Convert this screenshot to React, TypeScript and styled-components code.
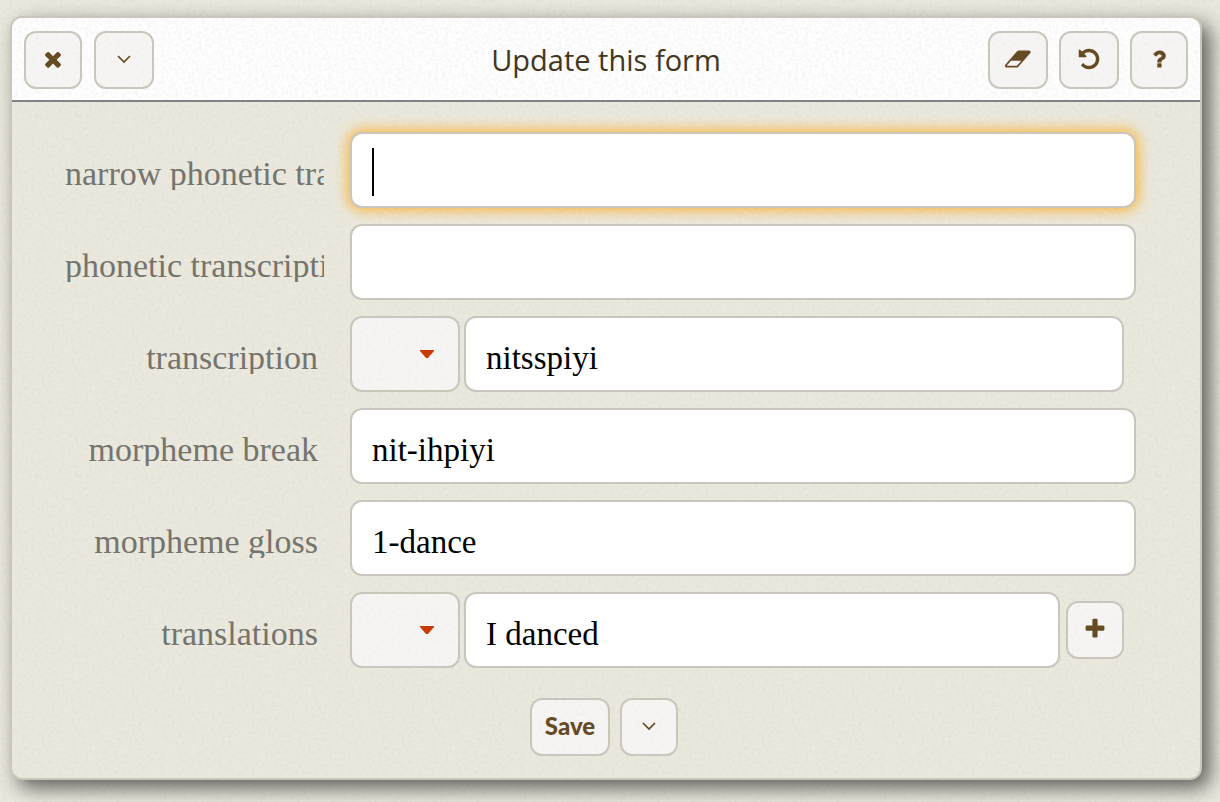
import React from "react";
import styled, { createGlobalStyle, css } from "styled-components";

const svgUrl = (svg: string) => `url("data:image/svg+xml,${encodeURIComponent(svg)}")`;

/* Tiling paper grain: dark specks whose strength is set by the alpha gain. */
const grain = (gain: number) =>
  svgUrl(
    `<svg xmlns="http://www.w3.org/2000/svg" width="180" height="180"><filter id="g" x="0" y="0" width="100%" height="100%"><feTurbulence type="fractalNoise" baseFrequency="0.3" numOctaves="2" seed="4" stitchTiles="stitch"/><feColorMatrix values="0 0 0 0 0.3  0 0 0 0 0.3  0 0 0 0 0.3  ${gain} 0 0 0 ${-gain * 0.38}"/></filter><rect width="180" height="180" filter="url(#g)"/></svg>`
  );

const caretDown = svgUrl(
  `<svg xmlns="http://www.w3.org/2000/svg" width="14" height="9"><path d="M0 0H14V1L8 8H6L0 1Z" fill="#c93a06"/></svg>`
);

const color = {
  paper: "#ebe9de",
  edge: "#cac6bb",
  button: "#f7f5f4",
  icon: "#654b24",
  title: "#433620",
  label: "#74746d",
};

const sans = `"Open Sans", "Noto Sans", sans-serif`;
const serif = `"Liberation Serif", serif`;

const GlobalStyle = createGlobalStyle`
  *, *::before, *::after { box-sizing: border-box; }
  body {
    margin: 0;
    background: ${grain(0.17)} ${color.paper};
    font-family: ${serif};
  }
`;

const Page = styled.main`
  padding: 16px 18px 22px 10px;
`;

const Dialog = styled.form`
  border: 2px solid ${color.edge};
  border-radius: 12px;
  background: ${grain(0.17)} ${color.paper};
  box-shadow: 8px 8px 20px rgba(0, 0, 0, 0.6);
`;

const Header = styled.header`
  display: grid;
  grid-template-columns: 1fr auto 1fr;
  align-items: center;
  height: 84px;
  padding: 2px 12px 0;
  border-bottom: 2px solid #828284;
  border-radius: 10px 10px 0 0;
  background: ${grain(0.22)} #fff;
`;

const Title = styled.h1`
  margin: 0;
  font: 500 29px/40px ${sans};
  color: ${color.title};
`;

const Tools = styled.div<{ $end?: boolean }>`
  display: flex;
  gap: ${(p) => (p.$end ? 11 : 12)}px;
  justify-content: ${(p) => (p.$end ? "flex-end" : "flex-start")};
`;

const surface = css`
  border: 2px solid ${color.edge};
  border-radius: 12px;
`;

const Button = styled.button<{ $width?: number }>`
  ${surface}
  display: flex;
  flex: none;
  align-items: center;
  justify-content: center;
  width: ${(p) => p.$width ?? 58}px;
  height: 58px;
  padding: 0 0 2px;
  background: ${grain(0.1)} ${color.button};
  color: ${color.icon};
  font: 900 24px/30px Lato, ${sans};
  cursor: pointer;

  svg {
    display: block;
    height: 24px;
  }
`;

const Fields = styled.div`
  display: flex;
  flex-direction: column;
  gap: 16px;
  padding: 30px 64px 0 53px;
`;

const Row = styled.div`
  display: grid;
  grid-template-columns: 259px minmax(0, 1fr);
  column-gap: 26px;
`;

const Label = styled.label`
  align-self: start;
  margin-top: 26px;
  padding-right: 6px;
  overflow: hidden;
  white-space: nowrap;
  text-align: right;
  font-size: 34px;
  line-height: 32px;
  color: ${color.label};
`;

const Controls = styled.div<{ $inset?: boolean }>`
  position: relative;
  display: flex;
  align-items: center;
  gap: 4px;
  padding-right: ${(p) => (p.$inset ? 12 : 0)}px;
`;

const TextInput = styled.input<{ $active?: boolean }>`
  ${surface}
  flex: 1;
  min-width: 0;
  height: 76px;
  padding: 8px 20px 0;
  outline: none;
  background: #fff;
  color: #000;
  font: 400 33px/40px ${serif};
  ${(p) => p.$active && "box-shadow: 0 0 14px 2px #f9b233;"}

  & + button {
    margin-left: 2px;
  }
`;

const Caret = styled.span`
  position: absolute;
  top: 16px;
  left: 22px;
  width: 2px;
  height: 48px;
  background: #000;
`;

const Select = styled.select`
  ${surface}
  appearance: none;
  width: 110px;
  height: 76px;
  padding: 0 40px 0 16px;
  background: ${caretDown} right 24px center no-repeat, ${grain(0.1)} ${color.button};
  font: 400 33px/40px ${serif};
`;

const Footer = styled.footer`
  display: flex;
  justify-content: center;
  gap: 10px;
  padding: 30px 4px 22px 0;
`;

const paths = {
  close:
    "M1490 1322q0 40-28 68l-136 136q-28 28-68 28t-68-28l-294-294-294 294q-28 28-68 28t-68-28l-136-136q-28-28-28-68t28-68l294-294-294-294q-28-28-28-68t28-68l136-136q28-28 68-28t68 28l294 294 294-294q28-28 68-28t68 28l136 136q28 28 28 68t-28 68l-294 294 294 294q28 28 28 68z",
  plus:
    "M1600 736v192q0 40-28 68t-68 28h-416v416q0 40-28 68t-68 28h-192q-40 0-68-28t-28-68v-416h-416q-40 0-68-28t-28-68v-192q0-40 28-68t68-28h416v-416q0-40 28-68t68-28h192q40 0 68 28t28 68v416h416q40 0 68 28t28 68z",
  undo:
    "M1664 896q0 156-61 298t-164 245-245 164-298 61q-172 0-327-72.5t-264-204.5q-7-10-6.5-22.5t8.5-20.5l137-138q10-9 25-9 16 2 23 12 73 95 179 147t225 52q104 0 198.5-40.5t163.5-109.5 109.5-163.5 40.5-198.5-40.5-198.5-109.5-163.5-163.5-109.5-198.5-40.5q-98 0-188 35.5t-160 101.5l137 138q31 30 14 69-17 40-59 40h-448q-26 0-45-19t-19-45v-448q0-42 40-59 39-17 69 14l130 129q107-101 244.5-156.5t284.5-55.5q156 0 298 61t245 164 164 245 61 298z",
  help:
    "M1088 1256v240q0 16-12 28t-28 12h-240q-16 0-28-12t-12-28v-240q0-16 12-28t28-12h240q16 0 28 12t12 28zm316-600q0 54-15.5 101t-35 76.5-55 59.5-57.5 43.5-61 35.5q-41 23-68.5 65t-27.5 67q0 17-12 32.5t-28 15.5h-240q-15 0-25.5-18.5t-10.5-37.5v-45q0-83 65-156.5t143-108.5q59-27 84-56t25-76q0-42-46.5-74t-107.5-32q-65 0-108 29-35 25-107 115-13 16-31 16-12 0-25-8l-164-125q-13-10-15.5-25t5.5-28q160-266 464-266 80 0 161 31t146 83 106 127.5 41 158.5z",
  eraser:
    "M960 1408l336-384h-768l-336 384h768zm1013-1077q15 34 9.5 71.5t-30.5 65.5l-896 1024q-38 44-96 44h-768q-38 0-69.5-20.5t-47.5-54.5q-15-34-9.5-71.5t30.5-65.5l896-1024q38-44 96-44h768q38 0 69.5 20.5t47.5 54.5z",
};

const Icon = ({ name }: { name: keyof typeof paths }) => (
  <svg viewBox={name === "eraser" ? "0 0 2048 1792" : "0 0 1792 1792"} aria-hidden="true">
    <path d={paths[name]} fill="currentColor" />
  </svg>
);

const Chevron = () => (
  <svg viewBox="0 0 24 24" aria-hidden="true">
    <path d="M6 9l6 6 6-6" fill="none" stroke="currentColor" strokeWidth="1.7" />
  </svg>
);

type Field = {
  id: string;
  label: string;
  value: string;
  select?: boolean;
  add?: boolean;
  active?: boolean;
};

const fields: Field[] = [
  { id: "narrow", label: "narrow phonetic transcription", value: "", active: true },
  { id: "phonetic", label: "phonetic transcription", value: "" },
  { id: "transcription", label: "transcription", value: "nitsspiyi", select: true },
  { id: "break", label: "morpheme break", value: "nit-ihpiyi" },
  { id: "gloss", label: "morpheme gloss", value: "1-dance" },
  { id: "translations", label: "translations", value: "I danced", select: true, add: true },
];

const FieldRow = ({ id, label, value, select, add, active }: Field) => (
  <Row>
    <Label htmlFor={id}>{label}</Label>
    <Controls $inset={select}>
      {select && (
        <Select aria-label={`${label} acceptability`} defaultValue="">
          <option value=""></option>
          <option value="*">*</option>
          <option value="?">?</option>
          <option value="#">#</option>
        </Select>
      )}
      <TextInput id={id} type="text" defaultValue={value} $active={active} />
      {active && <Caret />}
      {add && (
        <Button type="button" aria-label="Add translation">
          <Icon name="plus" />
        </Button>
      )}
    </Controls>
  </Row>
);

export default function App() {
  return (
    <>
      <GlobalStyle />
      <Page>
        <Dialog onSubmit={(e: React.FormEvent) => e.preventDefault()}>
          <Header>
            <Tools>
              <Button type="button" aria-label="Close">
                <Icon name="close" />
              </Button>
              <Button type="button" aria-label="Show more fields" $width={60}>
                <Chevron />
              </Button>
            </Tools>
            <Title>Update this form</Title>
            <Tools $end>
              <Button type="button" aria-label="Clear" $width={60}>
                <Icon name="eraser" />
              </Button>
              <Button type="button" aria-label="Undo" $width={60}>
                <Icon name="undo" />
              </Button>
              <Button type="button" aria-label="Help">
                <Icon name="help" />
              </Button>
            </Tools>
          </Header>
          <Fields>
            {fields.map((f) => (
              <FieldRow key={f.id} {...f} />
            ))}
          </Fields>
          <Footer>
            <Button type="submit" $width={80}>
              Save
            </Button>
            <Button type="button" aria-label="More fields">
              <Chevron />
            </Button>
          </Footer>
        </Dialog>
      </Page>
    </>
  );
}
